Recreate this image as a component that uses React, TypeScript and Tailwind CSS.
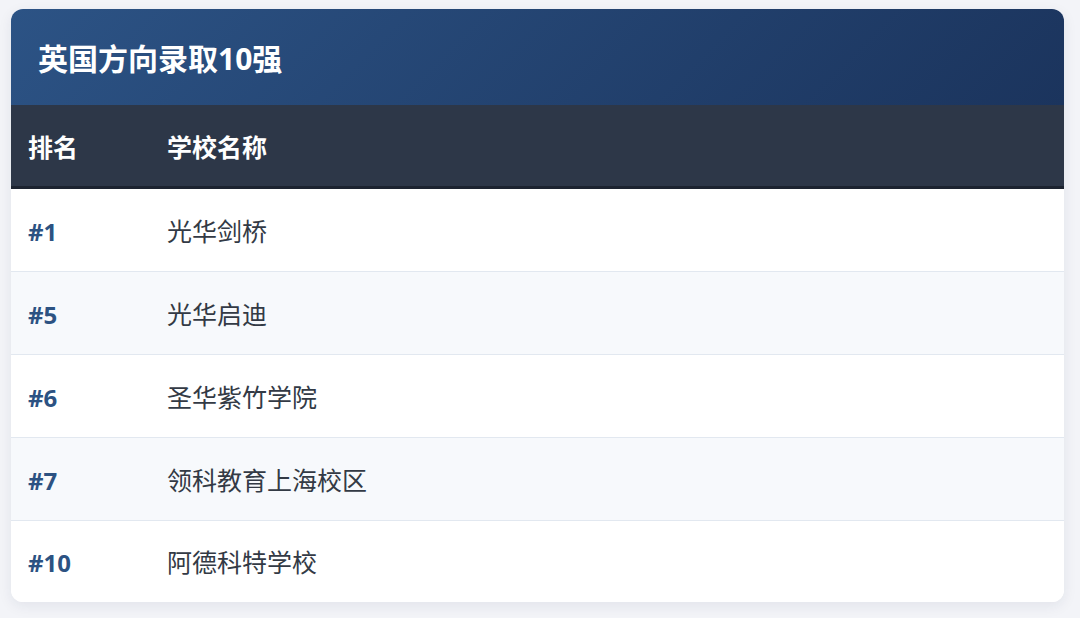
const schools = [
  { rank: 1, name: '光华剑桥' },
  { rank: 5, name: '光华启迪' },
  { rank: 6, name: '圣华紫竹学院' },
  { rank: 7, name: '领科教育上海校区' },
  { rank: 10, name: '阿德科特学校' },
];

export default function App() {
  return (
    <div
      className="min-h-[618px] w-[1080px] bg-[#f3f4f8] pl-[11px] pr-[16px] pt-[9px] pb-[17px]"
      style={{ fontFamily: '"Open Sans", "Noto Sans CJK SC", sans-serif' }}
    >
      <div className="overflow-hidden rounded-xl bg-white shadow-[0_4px_14px_rgba(30,40,80,0.08)]">
        {/* Title */}
        <div className="flex h-[96px] items-center bg-linear-135 from-[#2c5385] to-[#1b345d] px-[27px] pt-[3px]">
          <h1 className="text-[30px] font-bold leading-none text-white">英国方向录取10强</h1>
        </div>

        {/* Column headers */}
        <div className="flex h-[84px] items-center border-b-[3px] border-[#1c2330] bg-[#2d3748] pt-[4px] text-[25px] font-bold text-white">
          <div className="w-[156px] pl-[17px]">排名</div>
          <div className="flex-1">学校名称</div>
        </div>

        {/* Rows */}
        {schools.map((s, i) => {
          const last = i === schools.length - 1;
          return (
            <div
              key={s.rank}
              className={`flex items-center pt-[3px] ${last ? 'h-[81px]' : 'h-[83px] border-b border-[#e2e8f0]'} ${
                i % 2 === 1 ? 'bg-[#f7f9fc]' : 'bg-white'
              }`}
            >
              <div className="w-[156px] pl-[17px] text-[24px] font-bold text-[#2c5282]">#{s.rank}</div>
              <div className="flex-1 text-[25px] text-[#333a45]">{s.name}</div>
            </div>
          );
        })}
      </div>
    </div>
  );
}
